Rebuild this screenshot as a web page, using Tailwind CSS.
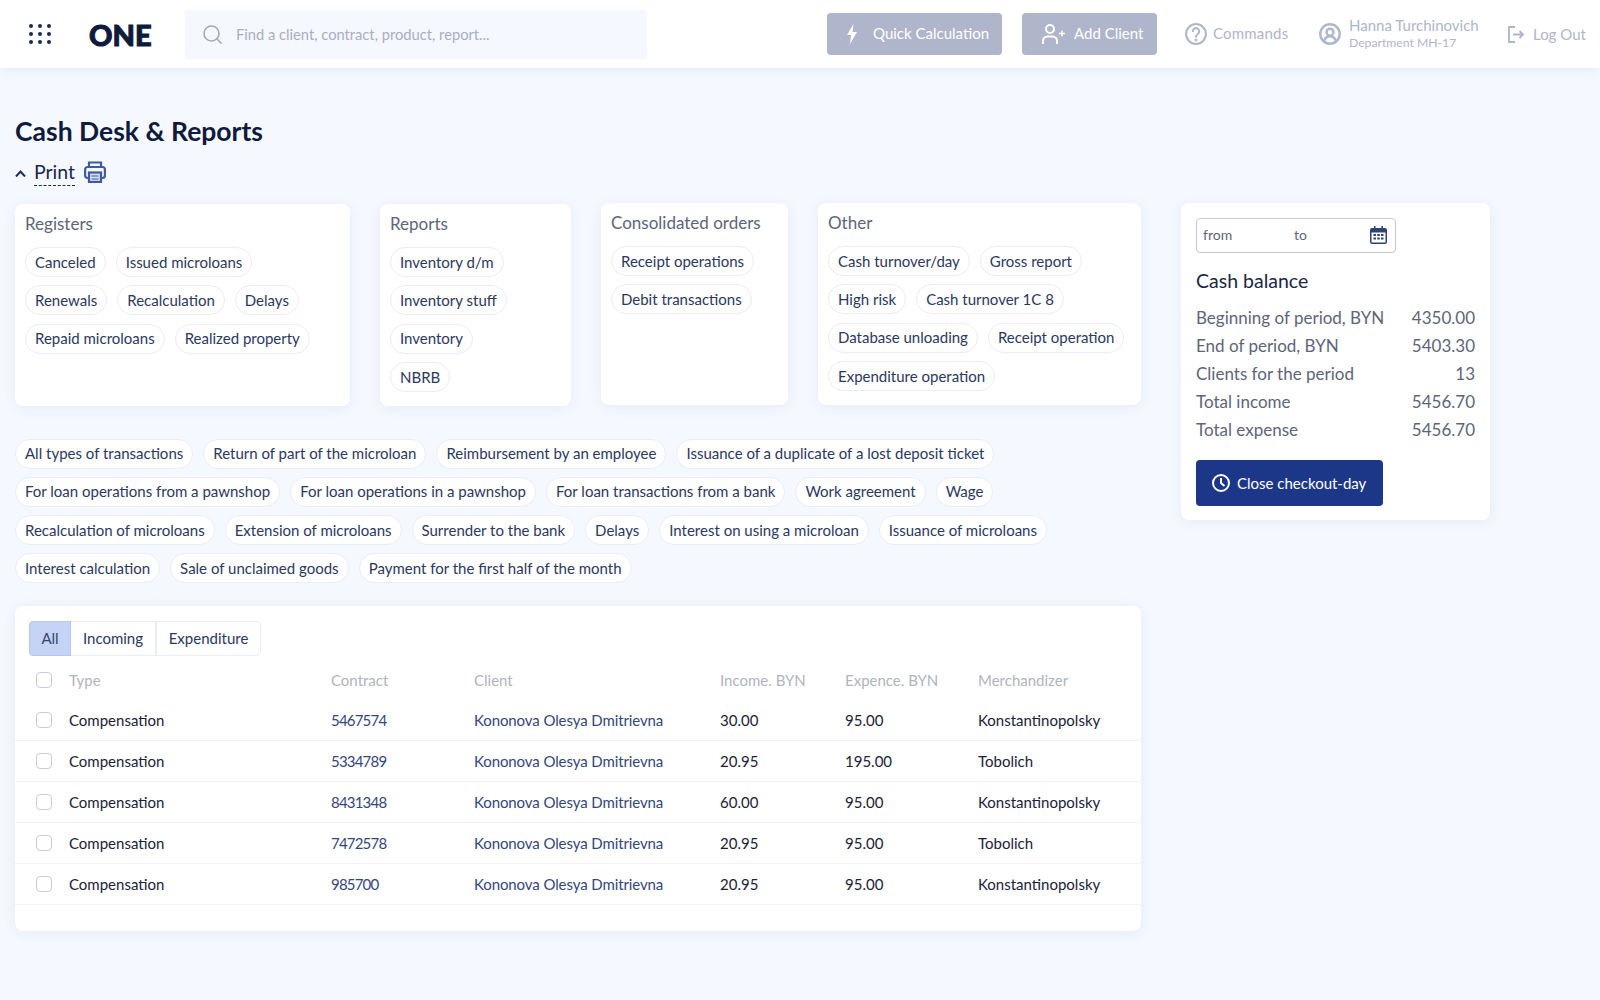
<!DOCTYPE html>
<html lang="en">
<head>
<meta charset="UTF-8">
<title>Cash Desk & Reports</title>
<script src="https://cdn.jsdelivr.net/npm/@tailwindcss/browser@4"></script>
</head>
<body class="bg-[#f5f8ff] h-[1000px] overflow-hidden font-['Lato',sans-serif] text-[#2b3860]">

<!-- Top bar -->
<header class="h-[68px] bg-white shadow-[0_2px_12px_rgba(40,60,120,0.08)] flex items-center relative">
  <svg class="ml-[29px] w-[22px] h-[20px] text-[#1d2b50]" viewBox="0 0 22 20" fill="currentColor">
    <circle cx="2" cy="2" r="2"/><circle cx="11" cy="2" r="2"/><circle cx="20" cy="2" r="2"/>
    <circle cx="2" cy="10" r="2"/><circle cx="11" cy="10" r="2"/><circle cx="20" cy="10" r="2"/>
    <circle cx="2" cy="18" r="2"/><circle cx="11" cy="18" r="2"/><circle cx="20" cy="18" r="2"/>
  </svg>
  <div class="ml-[38px] w-[96px] text-[29px] leading-none font-black text-[#0f1a3c] [-webkit-text-stroke:1px_#0f1a3c]">ONE</div>
  <div class="w-[462px] h-[49px] rounded bg-[#f5f8ff] flex items-center pl-[18px]">
    <svg class="w-[19px] h-[19px] text-[#a3a9bd]" viewBox="0 0 19 19" fill="none" stroke="currentColor" stroke-width="1.6" stroke-linecap="round"><circle cx="8.500" cy="8.500" r="7.500"/><path d="M14 14l4.200 4.200"/></svg>
    <span class="ml-[14px] text-[14.7px] text-[#a9aebf]">Find a client, contract, product, report...</span>
  </div>
  <div class="ml-[180px] w-[175px] h-[42px] rounded bg-[#afb5ca] text-white flex items-center pl-[20px]">
    <svg class="w-[10px] h-[20px]" viewBox="0 0 10 20" fill="currentColor"><path d="M6.500 0L0 11h4l-1 9L10 8H5.500z"/></svg>
    <span class="ml-[16px] mb-[1px] text-[15px]">Quick Calculation</span>
  </div>
  <div class="ml-[20px] w-[135px] h-[42px] rounded bg-[#afb5ca] text-white flex items-center pl-[19px]">
    <svg class="w-[24px] h-[20px]" viewBox="0 0 24 20" fill="none" stroke="currentColor" stroke-width="2"><circle cx="9" cy="5" r="4"/><path d="M2 20v-3a4.500 4.500 0 0 1 4.500-4.500h5a4.500 4.500 0 0 1 4.500 4.500v3"/><path d="M18 9.500h6M21 6.500v6" stroke-width="1.400"/></svg>
    <span class="ml-[9px] mb-[2px] text-[15px]">Add Client</span>
  </div>
  <svg class="ml-[28px] w-[22px] h-[22px] text-[#afb5ca]" viewBox="0 0 24 24" fill="none" stroke="currentColor" stroke-width="2.200" stroke-linecap="round"><circle cx="12" cy="12" r="10.800"/><path d="M8.500 9a3.500 3.500 0 1 1 5.500 3c-1.300.9-2 1.500-2 3"/><circle cx="12" cy="18.500" r=".6"/></svg>
  <span class="ml-[6px] mb-[2px] w-[106px] text-[15px] tracking-[0.2px] text-[#afb5ca]">Commands</span>
  <svg class="w-[22px] h-[22px] text-[#afb5ca]" viewBox="0 0 24 24" fill="none" stroke="currentColor" stroke-width="2.600"><circle cx="12" cy="12" r="10.600"/><circle cx="12" cy="10" r="3.800"/><path d="M5.500 20c1-3.500 3.500-5.500 6.500-5.500s5.500 2 6.500 5.500"/></svg>
  <div class="ml-[8px] mb-[2px] w-[159px] text-[#afb5ca]">
    <div class="text-[15px] leading-[18px]">Hanna Turchinovich</div>
    <div class="text-[12.2px] leading-[16px] mt-[1px]">Department MH-17</div>
  </div>
  <svg class="w-[17px] h-[17px] text-[#afb5ca]" viewBox="0 0 17 17" fill="none" stroke="currentColor" stroke-width="1.800"><path d="M7 1H1v15h6"/><path d="M5 8.500h10M11.500 5l3.500 3.500-3.500 3.500"/></svg>
  <span class="ml-[8px] text-[15px] text-[#afb5ca]">Log Out</span>
</header>

<main class="px-[15px]">
  <h1 class="mt-[44px] text-[26.500px] leading-[38px] font-bold text-[#0f1a3c]">Cash Desk &amp; Reports</h1>
  <div class="mt-[6px] h-[32px] flex items-center">
    <svg class="mt-[3px] w-[11px] h-[7px] text-[#1e2d58]" viewBox="0 0 11 7" fill="none" stroke="currentColor" stroke-width="2"><path d="M1 6.500l4.500-5L10 6.500"/></svg>
    <span class="ml-[8px] text-[19.500px] leading-[26px] text-[#1a274c] border-b border-dashed border-[#1a274c]">Print</span>
    <svg class="ml-[9px] w-[22px] h-[22px] text-[#3f5a9f]" viewBox="0 0 22 22" fill="none" stroke="currentColor" stroke-width="2.200"><path d="M5 6V1.500h12V6"/><rect x="1.100" y="6" width="19.800" height="11" rx="2.500"/><rect x="5" y="11.500" width="12" height="9.500" fill="#d5def5"/><path d="M7.500 15h7M7.500 18h7" stroke-width="1.200"/></svg>
  </div>

  <div class="mt-[15px] flex items-start">
    <div class="w-[1126px]">
      <!-- Report cards -->
      <div class="flex items-start">
        <section class="w-[335px] h-[202px] mt-px bg-white rounded-lg shadow-[0_2px_14px_rgba(40,60,120,0.07)] px-[10px] pt-[8px]">
          <h2 class="text-[17px] leading-[24px] text-[#5d6579]">Registers</h2>
          <div class="mt-[11px] flex flex-wrap gap-x-[10px] gap-y-[8.300px]">
            <span class="h-[30px] px-[9px] flex items-center rounded-full border border-[#e9edf6] bg-white text-[15px]">Canceled</span>
            <span class="h-[30px] px-[9px] flex items-center rounded-full border border-[#e9edf6] bg-white text-[15px]">Issued microloans</span>
            <span class="h-[30px] px-[9px] flex items-center rounded-full border border-[#e9edf6] bg-white text-[15px]">Renewals</span>
            <span class="h-[30px] px-[9px] flex items-center rounded-full border border-[#e9edf6] bg-white text-[15px]">Recalculation</span>
            <span class="h-[30px] px-[9px] flex items-center rounded-full border border-[#e9edf6] bg-white text-[15px]">Delays</span>
            <span class="h-[30px] px-[9px] flex items-center rounded-full border border-[#e9edf6] bg-white text-[15px]">Repaid microloans</span>
            <span class="h-[30px] px-[9px] flex items-center rounded-full border border-[#e9edf6] bg-white text-[15px]">Realized property</span>
          </div>
        </section>
        <section class="ml-[30px] w-[191px] h-[202px] mt-px bg-white rounded-lg shadow-[0_2px_14px_rgba(40,60,120,0.07)] px-[10px] pt-[8px]">
          <h2 class="text-[17px] leading-[24px] text-[#5d6579]">Reports</h2>
          <div class="mt-[11px] flex flex-col items-start gap-y-[8.300px]">
            <span class="h-[30px] px-[9px] flex items-center rounded-full border border-[#e9edf6] bg-white text-[15px]">Inventory d/m</span>
            <span class="h-[30px] px-[9px] flex items-center rounded-full border border-[#e9edf6] bg-white text-[15px]">Inventory stuff</span>
            <span class="h-[30px] px-[9px] flex items-center rounded-full border border-[#e9edf6] bg-white text-[15px]">Inventory</span>
            <span class="h-[30px] px-[9px] flex items-center rounded-full border border-[#e9edf6] bg-white text-[15px]">NBRB</span>
          </div>
        </section>
        <section class="ml-[30px] w-[187px] h-[202px] bg-white rounded-lg shadow-[0_2px_14px_rgba(40,60,120,0.07)] px-[10px] pt-[8px]">
          <h2 class="text-[17px] leading-[24px] text-[#5d6579]">Consolidated orders</h2>
          <div class="mt-[11px] flex flex-col items-start gap-y-[8.300px]">
            <span class="h-[30px] px-[9px] flex items-center rounded-full border border-[#e9edf6] bg-white text-[15px]">Receipt operations</span>
            <span class="h-[30px] px-[9px] flex items-center rounded-full border border-[#e9edf6] bg-white text-[15px]">Debit transactions</span>
          </div>
        </section>
        <section class="ml-[30px] w-[323px] h-[202px] bg-white rounded-lg shadow-[0_2px_14px_rgba(40,60,120,0.07)] px-[10px] pt-[8px]">
          <h2 class="text-[17px] leading-[24px] text-[#5d6579]">Other</h2>
          <div class="mt-[11px] flex flex-wrap gap-x-[10px] gap-y-[8.300px]">
            <span class="h-[30px] px-[9px] flex items-center rounded-full border border-[#e9edf6] bg-white text-[15px]">Cash turnover/day</span>
            <span class="h-[30px] px-[9px] flex items-center rounded-full border border-[#e9edf6] bg-white text-[15px]">Gross report</span>
            <span class="h-[30px] px-[9px] flex items-center rounded-full border border-[#e9edf6] bg-white text-[15px]">High risk</span>
            <span class="h-[30px] px-[9px] flex items-center rounded-full border border-[#e9edf6] bg-white text-[15px]">Cash turnover 1C 8</span>
            <span class="h-[30px] px-[9px] flex items-center rounded-full border border-[#e9edf6] bg-white text-[15px]">Database unloading</span>
            <span class="h-[30px] px-[9px] flex items-center rounded-full border border-[#e9edf6] bg-white text-[15px]">Receipt operation</span>
            <span class="h-[30px] px-[9px] flex items-center rounded-full border border-[#e9edf6] bg-white text-[15px]">Expenditure operation</span>
          </div>
        </section>
      </div>

      <!-- Transaction filters -->
      <div class="mt-[32.500px] flex flex-wrap gap-x-[10px] gap-y-[8.200px]">
        <span class="h-[30px] px-[9px] flex items-center rounded-full border border-[#e9edf6] bg-white text-[15px]">All types of transactions</span>
        <span class="h-[30px] px-[9px] flex items-center rounded-full border border-[#e9edf6] bg-white text-[15px]">Return of part of the microloan</span>
        <span class="h-[30px] px-[9px] flex items-center rounded-full border border-[#e9edf6] bg-white text-[15px]">Reimbursement by an employee</span>
        <span class="h-[30px] px-[9px] flex items-center rounded-full border border-[#e9edf6] bg-white text-[15px]">Issuance of a duplicate of a lost deposit ticket</span>
        <span class="h-[30px] px-[9px] flex items-center rounded-full border border-[#e9edf6] bg-white text-[15px]">For loan operations from a pawnshop</span>
        <span class="h-[30px] px-[9px] flex items-center rounded-full border border-[#e9edf6] bg-white text-[15px]">For loan operations in a pawnshop</span>
        <span class="h-[30px] px-[9px] flex items-center rounded-full border border-[#e9edf6] bg-white text-[15px]">For loan transactions from a bank</span>
        <span class="h-[30px] px-[9px] flex items-center rounded-full border border-[#e9edf6] bg-white text-[15px]">Work agreement</span>
        <span class="h-[30px] px-[9px] flex items-center rounded-full border border-[#e9edf6] bg-white text-[15px]">Wage</span>
        <span class="h-[30px] px-[9px] flex items-center rounded-full border border-[#e9edf6] bg-white text-[15px]">Recalculation of microloans</span>
        <span class="h-[30px] px-[9px] flex items-center rounded-full border border-[#e9edf6] bg-white text-[15px]">Extension of microloans</span>
        <span class="h-[30px] px-[9px] flex items-center rounded-full border border-[#e9edf6] bg-white text-[15px]">Surrender to the bank</span>
        <span class="h-[30px] px-[9px] flex items-center rounded-full border border-[#e9edf6] bg-white text-[15px]">Delays</span>
        <span class="h-[30px] px-[9px] flex items-center rounded-full border border-[#e9edf6] bg-white text-[15px]">Interest on using a microloan</span>
        <span class="h-[30px] px-[9px] flex items-center rounded-full border border-[#e9edf6] bg-white text-[15px]">Issuance of microloans</span>
        <span class="h-[30px] px-[9px] flex items-center rounded-full border border-[#e9edf6] bg-white text-[15px]">Interest calculation</span>
        <span class="h-[30px] px-[9px] flex items-center rounded-full border border-[#e9edf6] bg-white text-[15px]">Sale of unclaimed goods</span>
        <span class="h-[30px] px-[9px] flex items-center rounded-full border border-[#e9edf6] bg-white text-[15px]">Payment for the first half of the month</span>
      </div>

      <!-- Operations table -->
      <section class="mt-[23px] w-[1126px] h-[325px] bg-white rounded-lg shadow-[0_2px_14px_rgba(40,60,120,0.07)] pt-[15px]">
        <div class="ml-[14px] flex h-[35px] text-[15px] w-[232px] rounded border border-[#e9edf6]">
          <div class="w-[42px] -ml-px -my-px flex items-center justify-center rounded-l bg-[#c5d3f7] border border-[#b7c7f2] text-[#33456f]">All</div>
          <div class="w-[86px] flex items-center justify-center border-r-2 border-[#e9edf6]">Incoming</div>
          <div class="flex-1 flex items-center justify-center">Expenditure</div>
        </div>
        <div class="mt-[4px] h-[40px] grid grid-cols-[54px_262px_143px_246px_125px_133px_1fr] items-center text-[15px] text-[#b1b4bd]">
          <div class="pl-[21px]"><div class="w-[16px] h-[16px] rounded border border-[#c9ccd3]"></div></div>
          <div>Type</div><div>Contract</div><div>Client</div><div>Income. BYN</div><div>Expence. BYN</div><div>Merchandizer</div>
        </div>
        <div class="h-[41px] grid grid-cols-[54px_262px_143px_246px_125px_133px_1fr] items-center text-[15px] border-b border-[#f1f3f8]">
          <div class="pl-[21px]"><div class="w-[16px] h-[16px] rounded border border-[#c9ccd3]"></div></div>
          <div class="text-[#1a2238]">Compensation</div><div class="text-[#34467c] tracking-[-0.8px]">5467574</div><div class="text-[#34467c] tracking-[-0.1px]">Kononova Olesya Dmitrievna</div><div class="text-[#1a2238]">30.00</div><div class="text-[#1a2238]">95.00</div><div class="text-[#1a2238]">Konstantinopolsky</div>
        </div>
        <div class="h-[41px] grid grid-cols-[54px_262px_143px_246px_125px_133px_1fr] items-center text-[15px] border-b border-[#f1f3f8]">
          <div class="pl-[21px]"><div class="w-[16px] h-[16px] rounded border border-[#c9ccd3]"></div></div>
          <div class="text-[#1a2238]">Compensation</div><div class="text-[#34467c] tracking-[-0.8px]">5334789</div><div class="text-[#34467c] tracking-[-0.1px]">Kononova Olesya Dmitrievna</div><div class="text-[#1a2238]">20.95</div><div class="text-[#1a2238]">195.00</div><div class="text-[#1a2238]">Tobolich</div>
        </div>
        <div class="h-[41px] grid grid-cols-[54px_262px_143px_246px_125px_133px_1fr] items-center text-[15px] border-b border-[#f1f3f8]">
          <div class="pl-[21px]"><div class="w-[16px] h-[16px] rounded border border-[#c9ccd3]"></div></div>
          <div class="text-[#1a2238]">Compensation</div><div class="text-[#34467c] tracking-[-0.8px]">8431348</div><div class="text-[#34467c] tracking-[-0.1px]">Kononova Olesya Dmitrievna</div><div class="text-[#1a2238]">60.00</div><div class="text-[#1a2238]">95.00</div><div class="text-[#1a2238]">Konstantinopolsky</div>
        </div>
        <div class="h-[41px] grid grid-cols-[54px_262px_143px_246px_125px_133px_1fr] items-center text-[15px] border-b border-[#f1f3f8]">
          <div class="pl-[21px]"><div class="w-[16px] h-[16px] rounded border border-[#c9ccd3]"></div></div>
          <div class="text-[#1a2238]">Compensation</div><div class="text-[#34467c] tracking-[-0.8px]">7472578</div><div class="text-[#34467c] tracking-[-0.1px]">Kononova Olesya Dmitrievna</div><div class="text-[#1a2238]">20.95</div><div class="text-[#1a2238]">95.00</div><div class="text-[#1a2238]">Tobolich</div>
        </div>
        <div class="h-[41px] grid grid-cols-[54px_262px_143px_246px_125px_133px_1fr] items-center text-[15px] border-b border-[#f1f3f8]">
          <div class="pl-[21px]"><div class="w-[16px] h-[16px] rounded border border-[#c9ccd3]"></div></div>
          <div class="text-[#1a2238]">Compensation</div><div class="text-[#34467c] tracking-[-0.8px]">985700</div><div class="text-[#34467c] tracking-[-0.1px]">Kononova Olesya Dmitrievna</div><div class="text-[#1a2238]">20.95</div><div class="text-[#1a2238]">95.00</div><div class="text-[#1a2238]">Konstantinopolsky</div>
        </div>
      </section>
    </div>

    <!-- Cash balance -->
    <aside class="ml-[40px] w-[309px] h-[317px] bg-white rounded-lg shadow-[0_2px_14px_rgba(40,60,120,0.07)] px-[15px] pt-[15px]">
      <div class="w-[200px] h-[35px] rounded border border-[#c6c9d2] flex items-center pl-[6px] pr-[8px] pb-[2px] text-[14px] text-[#5d6579]">
        <span class="w-[91px]">from</span><span class="flex-1">to</span>
        <svg class="w-[17px] h-[18px] text-[#2c4373]" viewBox="0 0 17 18" fill="currentColor"><path d="M4 0h1.500v2h6V0H13v2h2a2 2 0 0 1 2 2v12a2 2 0 0 1-2 2H2a2 2 0 0 1-2-2V4a2 2 0 0 1 2-2h2zM1.500 6.500V16a.5.5 0 0 0 .5.5h13a.5.5 0 0 0 .5-.5V6.500z"/><path d="M3.500 8h2.500v2H3.500zM7.300 8h2.500v2H7.300zM11 8h2.500v2H11zM3.500 11.500h2.500v2H3.500zM7.300 11.500h2.500v2H7.300zM11 11.500h2.500v2H11z"/></svg>
      </div>
      <h2 class="mt-[14px] text-[19.500px] leading-[28px] text-[#1b2745]">Cash balance</h2>
      <dl class="mt-[9px] text-[17px] leading-[28px] text-[#5d6579]">
        <div class="flex justify-between"><dt>Beginning of period, BYN</dt><dd>4350.00</dd></div>
        <div class="flex justify-between"><dt>End of period, BYN</dt><dd>5403.30</dd></div>
        <div class="flex justify-between"><dt>Clients for the period</dt><dd>13</dd></div>
        <div class="flex justify-between"><dt>Total income</dt><dd>5456.70</dd></div>
        <div class="flex justify-between"><dt>Total expense</dt><dd>5456.70</dd></div>
      </dl>
      <button class="mt-[16px] w-[187px] h-[46px] rounded bg-[#1c3787] text-white flex items-center pl-[16px] text-[15px]">
        <svg class="w-[18px] h-[18px]" viewBox="0 0 18 18" fill="none" stroke="currentColor" stroke-width="2"><circle cx="9" cy="9" r="8"/><path d="M9 4v5l3.500 3"/></svg>
        <span class="ml-[7px]">Close checkout-day</span>
      </button>
    </aside>
  </div>
</main>
</body>
</html>
